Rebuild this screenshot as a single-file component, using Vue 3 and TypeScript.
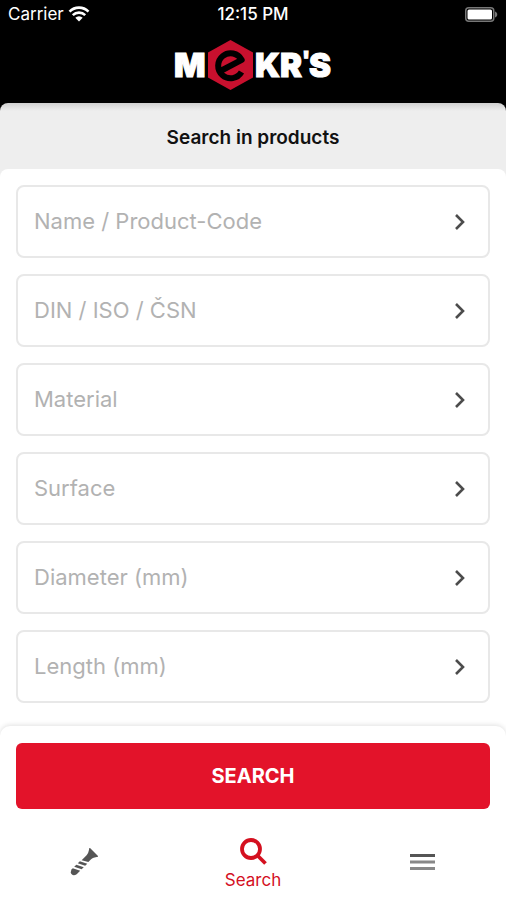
<script setup lang="ts">
interface Field {
  id: string
  label: string
}

const fields: Field[] = [
  { id: 'name', label: 'Name / Product-Code' },
  { id: 'norm', label: 'DIN / ISO / ČSN' },
  { id: 'material', label: 'Material' },
  { id: 'surface', label: 'Surface' },
  { id: 'diameter', label: 'Diameter (mm)' },
  { id: 'length', label: 'Length (mm)' },
]
</script>

<template>
  <div class="app">
    <header class="top">
      <div class="status">
        <div class="carrier">
          <span>Carrier</span>
          <svg class="wifi" viewBox="0 0 22 16" aria-hidden="true">
            <path d="M1.5 5.6a13.4 13.4 0 0 1 19 0M4.8 9.2a8.8 8.8 0 0 1 12.4 0" />
            <path class="dot" d="M11 15.6 7.3 11.8a5.2 5.2 0 0 1 7.4 0z" />
          </svg>
        </div>
        <span class="clock">12:15 PM</span>
        <div class="power">
          <svg class="battery" viewBox="0 0 33 15" aria-hidden="true">
            <rect class="shell" x="0.75" y="0.75" width="28" height="13.5" rx="3" />
            <rect class="charge" x="2.5" y="2.5" width="24.5" height="10" rx="1.5" />
            <path class="tip" d="M30 4.5v6c3-1 3-5 0-6z" />
          </svg>
        </div>
      </div>
      <svg class="logo" viewBox="0 0 162 52" role="img" aria-label="MEKR'S">
        <polygon class="hex" points="58.5,1 81,13.5 81,38.5 58.5,51 36,38.5 36,13.5" />
        <path class="emblem" d="M48.500 32 69.700 20.900A12.500 12.500 0 1 0 69.500 33" />
        <text class="mark" x="2" y="38">M</text>
        <text class="mark" x="83" y="38">KR<tspan x="130" y="28" class="tick">'</tspan><tspan x="137" y="38">S</tspan></text>
      </svg>
    </header>

    <h1 class="title">Search in products</h1>

    <main class="fields">
      <button v-for="field in fields" :key="field.id" type="button" class="field">
        <span class="label">{{ field.label }}</span>
        <svg class="chevron" viewBox="0 0 12 18" aria-hidden="true">
          <path d="M2 2l7 7-7 7" />
        </svg>
      </button>
    </main>

    <footer class="bottom">
      <button type="submit" class="submit">SEARCH</button>
      <nav class="tabs">
        <a href="#products" class="tab" aria-label="Products">
          <svg class="icon" viewBox="0 0 28 28" aria-hidden="true">
            <g class="solid" transform="translate(3.500 24.500) rotate(-45)">
              <path d="M29 -6.500V6.500Q24.500 3 21.500 3H18L14.500 -3H21.500Q24.500 -3 29 -6.500Z" />
              <path d="M9.500 -3.500H12.500L16 3.500H13ZM4.500 -3.500H7.500L11 3.500H8Z" />
              <path d="M2.500 -3.500 6 3.500H1Q-2.500 2.500 -2.500 0T1 -3.500Z" />
            </g>
          </svg>
        </a>
        <a href="#search" class="tab active" aria-current="page">
          <svg class="icon" viewBox="0 0 28 28" aria-hidden="true">
            <circle class="lens" cx="12" cy="11" r="9" />
            <path class="lens" d="M18.500 17.500l8 8" />
          </svg>
          <span>Search</span>
        </a>
        <a href="#menu" class="tab" aria-label="Menu">
          <svg class="icon" viewBox="0 0 28 28" aria-hidden="true">
            <path class="bar dark" d="M2 7.500h25" />
            <path class="bar" d="M2 14h25M2 20.500h25" />
          </svg>
        </a>
      </nav>
    </footer>
  </div>
</template>

<style>
body {
  margin: 0;
  background: #fff;
}
</style>

<style scoped>
.app {
  display: flex;
  flex-direction: column;
  min-height: 100vh;
  background: #eee;
  font-family: Inter, 'Noto Sans', sans-serif;
}

.top {
  display: flex;
  flex-direction: column;
  align-items: center;
  padding-bottom: 20px;
  background: #000;
  color: #fff;
}

.status {
  display: grid;
  grid-template-columns: 1fr auto 1fr;
  align-items: center;
  align-self: stretch;
  height: 28px;
  padding: 0 8px;
  font-size: 17px;
}

.carrier {
  display: flex;
  align-items: center;
  gap: 4px;
}

.clock {
  font-weight: 500;
}

.power {
  display: flex;
  justify-content: flex-end;
}

.wifi {
  width: 22px;
  height: 16px;
  fill: none;
  stroke: #fff;
  stroke-width: 2.6;
}

.wifi .dot {
  fill: #fff;
  stroke: none;
}

.battery {
  width: 33px;
  height: 15px;
}

.shell {
  fill: none;
  stroke: #777;
  stroke-width: 1.5;
}

.charge {
  fill: #fff;
}

.tip {
  fill: #777;
}

.logo {
  width: 162px;
  height: 52px;
  margin-top: 11px;
}

.mark {
  fill: #fff;
  stroke: #fff;
  stroke-width: 1;
  font-size: 33px;
  font-weight: 900;
}

.tick {
  font-size: 22px;
}

.hex {
  fill: #c8102e;
}

.emblem {
  fill: none;
  stroke: #000;
  stroke-width: 6;
  stroke-linejoin: round;
}

.title {
  margin: -8px 0 0;
  padding: 24px 16px 20px;
  border-radius: 8px 8px 0 0;
  background: linear-gradient(#d0d0d0, #eee 8px);
  color: #111;
  font-size: 19px;
  font-weight: 600;
  line-height: 22px;
  text-align: center;
}

.fields {
  display: flex;
  flex: 1;
  flex-direction: column;
  gap: 16px;
  padding: 16px 16px 33px;
  border-radius: 8px 8px 0 0;
  background: #fff;
}

.field {
  display: flex;
  align-items: center;
  justify-content: space-between;
  box-sizing: border-box;
  height: 73px;
  padding: 0 22px 0 16px;
  border: 2px solid #e8e8e8;
  border-radius: 8px;
  background: #fff;
  color: #b2b2b2;
  font: inherit;
  font-size: 22px;
  text-align: left;
}

.label {
  padding-bottom: 2px;
}

.chevron {
  width: 12px;
  height: 18px;
  fill: none;
  stroke: #4c4c4c;
  stroke-width: 2.6;
}

.bottom {
  margin-top: -10px;
  padding: 17px 16px 0;
  border-radius: 10px 10px 0 0;
  background: #fff;
  box-shadow: 0 -1px 5px rgba(0, 0, 0, 0.12);
}

.submit {
  display: block;
  width: 100%;
  height: 66px;
  border: 0;
  border-radius: 6px;
  background: #e3132a;
  color: #fff;
  font: inherit;
  font-size: 20px;
  font-weight: 700;
}

.tabs {
  display: grid;
  grid-template-columns: repeat(3, 1fr);
  height: 91px;
  margin: 0 -16px;
}

.tab {
  display: flex;
  flex-direction: column;
  align-items: center;
  justify-content: center;
  padding-top: 15px;
  color: #555;
  font-size: 17px;
  line-height: 20px;
  text-decoration: none;
}

.active {
  gap: 4px;
  padding-top: 18px;
  color: #d4101f;
}

.icon {
  width: 28px;
  height: 28px;
}

.solid {
  fill: #555;
}

.lens {
  fill: none;
  stroke: #d4101f;
  stroke-width: 3.8;
}

.bar {
  stroke: #888;
  stroke-width: 3;
}

.dark {
  stroke: #555;
}
</style>
